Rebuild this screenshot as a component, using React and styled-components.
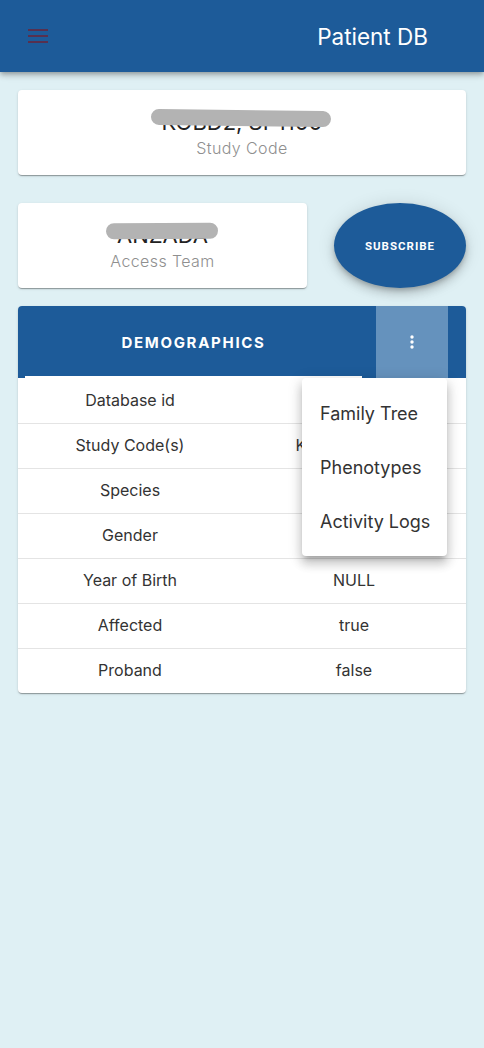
import styled, {createGlobalStyle} from 'styled-components'

const GlobalStyle = createGlobalStyle`
  html, body {
    margin: 0;
    padding: 0;
    background: #dff0f4;
    font-family: Inter, "Noto Sans", sans-serif;
  }
  #root {
    min-height: 1048px;
  }
`;

const AppBar = styled.header`
  height: 72px;
  background-color: #1d5b99;
  display: flex;
  align-items: center;
  justify-content: space-between;
  padding: 0 56px 0 28px;
  box-shadow: 0 2px 4px -1px rgba(0,0,0,0.2), 0 4px 5px 0 rgba(0,0,0,0.14), 0 1px 10px 0 rgba(0,0,0,0.12);
  position: relative;
  z-index: 2;
`;

const MenuButton = styled.button`
  background: none;
  border: none;
  padding: 0;
  width: 20px;
  height: 14px;
  display: flex;
  flex-direction: column;
  justify-content: space-between;
  cursor: pointer;

  span {
    display: block;
    height: 2px;
    background: #57304f;
  }
`;

const Title = styled.h1`
  margin: 0;
  color: #fff;
  font-size: 22.5px;
  font-weight: 400;
`;

const Content = styled.main`
  padding: 18px 18px 0;
  display: flex;
  flex-direction: column;
  gap: 28px;
`;

const Card = styled.div`
  background: #fff;
  border-radius: 4px;
  box-shadow: 0 2px 1px -1px rgba(0,0,0,0.2), 0 1px 1px 0 rgba(0,0,0,0.14), 0 1px 3px 0 rgba(0,0,0,0.12);
  text-align: center;
  padding: 18px 0 15px;
  flex: ${p => p.$flex || 'none'};
`;

const Redacted = styled.div`
  position: relative;
  display: inline-block;
  font-size: 22px;
  line-height: 28px;
  color: #222;
`;

const Scribble = styled.span`
  position: absolute;
  left: ${p => p.$left}px;
  right: ${p => p.$right}px;
  top: 2px;
  height: 16px;
  border-radius: 8px;
  background: #b3b3b3;
  transform: rotate(${p => p.$tilt}deg);
`;

const Label = styled.div`
  font-size: 16px;
  line-height: 24px;
  color: #8f8f8f;
  font-weight: 300;
  letter-spacing: 0.4px;
`;

const Row = styled.div`
  display: flex;
  align-items: center;
  gap: 27px;
`;

const SubscribeButton = styled.button`
  width: 132px;
  height: 85px;
  border: none;
  border-radius: 50%;
  background: #1d5b99;
  color: #fff;
  font-family: Roboto, Inter, sans-serif;
  font-weight: 700;
  font-size: 11.5px;
  letter-spacing: 1px;
  box-shadow: 0 3px 5px -1px rgba(0,0,0,0.2), 0 6px 10px 0 rgba(0,0,0,0.14), 0 1px 18px 0 rgba(0,0,0,0.12);
  cursor: pointer;
`;

const Panel = styled.section`
  background: #fff;
  border-radius: 4px;
  box-shadow: 0 2px 1px -1px rgba(0,0,0,0.2), 0 1px 1px 0 rgba(0,0,0,0.14), 0 1px 3px 0 rgba(0,0,0,0.12);
  position: relative;
  margin-top: -10px;
`;

const PanelHeader = styled.div`
  height: 72px;
  background: #1d5b99;
  border-radius: 4px 4px 0 0;
  display: flex;
  padding: 0 18px 0 7px;
`;

const Tab = styled.div`
  width: 337px;
  display: flex;
  align-items: center;
  justify-content: center;
  color: #fff;
  font-weight: 700;
  font-size: 15px;
  letter-spacing: 1.7px;
  border-bottom: 2px solid #fff;
  box-sizing: border-box;
  padding-top: 2px;
`;

const MoreButton = styled.button`
  margin-left: auto;
  width: 72px;
  border: none;
  background: #6592bd;
  display: flex;
  align-items: center;
  justify-content: center;
  cursor: pointer;
`;

const InfoRow = styled.div`
  display: grid;
  grid-template-columns: 1fr 1fr;
  height: 45px;
  align-items: center;
  text-align: center;
  font-size: 16px;
  color: #333;
  border-top: ${p => (p.$first ? 'none' : '1px solid #e4e4e4')};
  box-sizing: border-box;
  padding-bottom: 2px;
`;

const Dropdown = styled.div`
  position: absolute;
  top: 72px;
  left: 284px;
  width: 145px;
  background: #fff;
  border-radius: 4px;
  padding: 8px 0;
  box-shadow: 0 5px 5px -3px rgba(0,0,0,0.2), 0 8px 10px 1px rgba(0,0,0,0.14), 0 3px 14px 2px rgba(0,0,0,0.12);
  z-index: 3;
`;

const DropdownItem = styled.div`
  height: 54px;
  display: flex;
  align-items: center;
  padding-left: 18px;
  font-size: 18px;
  color: #333;
  cursor: pointer;
`;

// values hidden behind the open menu are left blank
const rows = [
    ['Database id', ''],
    ['Study Code(s)', 'KOBD2, SP1100'],
    ['Species', ''],
    ['Gender', ''],
    ['Year of Birth', 'NULL'],
    ['Affected', 'true'],
    ['Proband', 'false'],
]

export default function App() {
    return (
        <>
            <GlobalStyle/>
            <AppBar>
                <MenuButton aria-label="menu"><span/><span/><span/></MenuButton>
                <Title>Patient DB</Title>
            </AppBar>

            <Content>
                <Card>
                    <Redacted>
                        KOBD2, SP1100
                        <Scribble $left={-11} $right={-8} $tilt={0.7}/>
                    </Redacted>
                    <Label>Study Code</Label>
                </Card>

                <Row>
                    <Card $flex="1">
                        <Redacted>
                            ANZADA
                            <Scribble $left={-11} $right={-10} $tilt={-0.3}/>
                        </Redacted>
                        <Label>Access Team</Label>
                    </Card>
                    <SubscribeButton>SUBSCRIBE</SubscribeButton>
                </Row>

                <Panel>
                    <PanelHeader>
                        <Tab>DEMOGRAPHICS</Tab>
                        <MoreButton aria-label="more">
                            <svg width="4" height="14" viewBox="0 0 4 14">
                                <circle cx="2" cy="2" r="1.7" fill="#fff"/>
                                <circle cx="2" cy="7" r="1.7" fill="#fff"/>
                                <circle cx="2" cy="12" r="1.7" fill="#fff"/>
                            </svg>
                        </MoreButton>
                    </PanelHeader>
                    {rows.map(([k, v], i) => (
                        <InfoRow key={k} $first={i === 0}>
                            <span>{k}</span>
                            <span>{v}</span>
                        </InfoRow>
                    ))}
                    <Dropdown>
                        <DropdownItem>Family Tree</DropdownItem>
                        <DropdownItem>Phenotypes</DropdownItem>
                        <DropdownItem>Activity Logs</DropdownItem>
                    </Dropdown>
                </Panel>
            </Content>
        </>
    );
}
